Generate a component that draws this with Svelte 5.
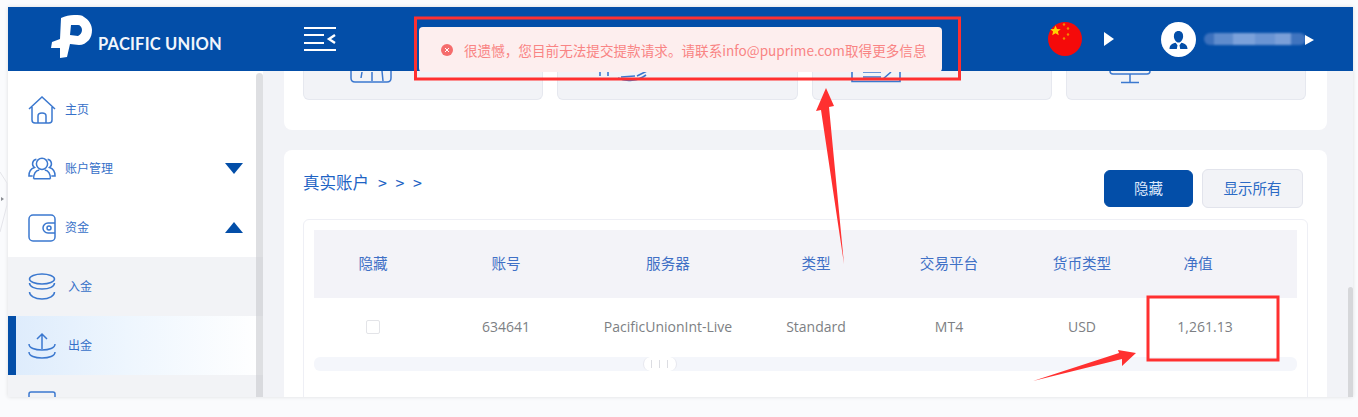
<script>
  const columns = [
    { label: "隐藏", width: 118 },
    { label: "账号", width: 148 },
    { label: "服务器", width: 176 },
    { label: "类型", width: 120 },
    { label: "交易平台", width: 146 },
    { label: "货币类型", width: 120 },
    { label: "净值", width: 112 }
  ];
  const row = ["634641", "PacificUnionInt-Live", "Standard", "MT4", "USD", "1,261.13"];
</script>

<div class="page">
  <div class="window">
    <header class="top">
      <div class="brand">
        <svg class="logo" width="42" height="44" viewBox="0 0 42 44">
          <path fill="#fff" fill-rule="evenodd" d="M10 3 C14 1 19 0 23 0 C28 0 31 0 33 2 C38 5 41 10 41 15 C41 19 40 22 38 25 C35 28 32 30 28 30 L19 29 L16 42 L9 43 L9 33 L0 33 L1 27 L9 24 Z M20 10 L19 20 L27 21 C29 20 31 18 31 15 C31 12 29 10 27 10 Z"/>
        </svg>
        <span class="brand-name">PACIFIC UNION</span>
      </div>
      <svg class="menu" width="34" height="26" viewBox="0 0 34 26" fill="none" stroke="#fff" stroke-width="2">
        <path d="M1 2H33M1 9H21M1 17H21M1 24H33" />
        <path d="M32 9L26 13L32 17" stroke-width="2.4" />
      </svg>
      <div class="top-right">
        <svg class="flag" width="34" height="34" viewBox="0 0 34 34">
          <circle cx="17" cy="17" r="17" fill="#f50a0a" />
          <path fill="#ffd000" d="M7.500 3.500l1.500 3.400 3.700.3-2.800 2.400.9 3.600-3.300-1.900-3.300 1.900.9-3.600-2.800-2.400 3.700-.3z" />
          <circle cx="16" cy="2.500" r="1.200" fill="#f08a00" />
          <circle cx="20" cy="6.500" r="1.200" fill="#f08a00" />
          <circle cx="20" cy="12.500" r="1.200" fill="#f08a00" />
          <circle cx="16" cy="16.500" r="1.200" fill="#f08a00" />
        </svg>
        <span class="caret first"></span>
        <svg class="avatar" width="35" height="35" viewBox="0 0 35 35">
          <circle cx="17.500" cy="17.500" r="17.500" fill="#fff" />
          <path fill="#034ea8" d="M17.500 9c3 0 4.600 2.200 4.600 5.200 0 3-2 6.300-4.600 6.300s-4.600-3.300-4.600-6.300C12.900 11.200 14.500 9 17.500 9z" />
          <path fill="#034ea8" d="M8.500 27c0-3.800 2.500-5.600 6.200-6.300l1.800 2.500-.7 3.800zM26.500 27c0-3.800-2.500-5.600-6.200-6.300l-1.800 2.500.7 3.800z" />
        </svg>
        <span class="blurred"></span>
        <span class="caret small"></span>
      </div>
    </header>

    <div class="body">
      <aside class="side">
        <nav class="nav">
          <div class="item">
            <svg class="ico" width="28" height="28" viewBox="0 0 28 28" fill="none" stroke="#3b78cf" stroke-width="1.500">
              <path d="M1 13L14 1l13 12M4 11v13c0 2 1 3 3 3h14c2 0 3-1 3-3V11M10 27v-7c0-2 1-3 4-3s4 1 4 3v7" />
            </svg>
            <span class="label">主页</span>
          </div>
          <div class="item">
            <svg class="ico" width="28" height="23" viewBox="0 0 30 24" fill="none" stroke="#3b78cf" stroke-width="1.600">
              <circle cx="15" cy="7" r="6" />
              <path d="M6 23c0-6 3-9 6-9.500M24 23c0-6-3-9-6-9.500M6 23h18M9 2a5 5 0 0 0-2 9c-3 1-6 4-6 9h4M21 2a5 5 0 0 1 2 9c3 1 6 4 6 9h-4" />
            </svg>
            <span class="label">账户管理</span>
            <span class="tri down"></span>
          </div>
          <div class="item">
            <svg class="ico" width="28" height="28" viewBox="0 0 28 28" fill="none" stroke="#3b78cf" stroke-width="1.500">
              <rect x="1" y="1" width="26" height="26" rx="4" />
              <path d="M27 9h-7a5 5 0 0 0 0 10h7" />
              <circle cx="21" cy="14" r="2" />
            </svg>
            <span class="label">资金</span>
            <span class="tri up"></span>
          </div>
          <div class="item sub">
            <svg class="ico" width="28" height="28" viewBox="0 0 28 28" fill="none" stroke="#3b78cf" stroke-width="1.500">
              <ellipse cx="14" cy="6" rx="12.500" ry="5" />
              <path d="M1.500 10c0 3.500 5 6 12.500 6s12.500-2.500 12.500-6M1.500 19c0 3.500 5 7 12.500 7s12.500-3.500 12.500-7" />
            </svg>
            <span class="label">入金</span>
          </div>
          <div class="item sub active">
            <svg class="ico" width="28" height="28" viewBox="0 0 28 28" fill="none" stroke="#3b78cf" stroke-width="1.500">
              <path d="M14 17V3M9 7l5-5 5 5M1 12c0 4 6 6 13 6s13-2 13-6M1 20c0 4 6 6 13 6s13-2 13-6" />
            </svg>
            <span class="label">出金</span>
          </div>
          <div class="item sub">
            <svg class="ico" width="28" height="28" viewBox="0 0 28 28" fill="none" stroke="#3b78cf" stroke-width="1.500">
              <rect x="1" y="1" width="26" height="22" rx="2" />
            </svg>
          </div>
        </nav>
        <div class="side-scroll"></div>
      </aside>

      <main class="main">
        <section class="card tiles">
          <div class="tile">
            <svg class="i1" width="42" height="12" viewBox="0 0 42 12" fill="none" stroke="#3b78cf" stroke-width="1.500">
              <path d="M1 0v7c0 3 2 4 4 4h32c2 0 4-1 4-4V0M12 1l-1 6M22 1v9M32 0l1 10" />
            </svg>
          </div>
          <div class="tile">
            <svg class="i2" width="50" height="12" viewBox="0 0 50 12" fill="none" stroke="#3b78cf" stroke-width="1.600">
              <path d="M1 0v5M9 0v5" />
              <path d="M19 7c8 4 20 3 28-3M22 6l14-1M38 5l10-5" />
            </svg>
          </div>
          <div class="tile">
            <svg class="i3" width="50" height="12" viewBox="0 0 50 12" fill="none" stroke="#3b78cf" stroke-width="1.600">
              <path d="M1 0v10.500h48V0M12 1h18M12 6h18M32 8l8-7M32 8l5 0" />
            </svg>
          </div>
          <div class="tile">
            <svg class="i4" width="42" height="13" viewBox="0 0 42 13" fill="none" stroke="#3b78cf" stroke-width="1.500">
              <path d="M1 0c0 2 1 3 3 3h34c2 0 3-1 3-3M21 3v8M12 11.500h18" />
            </svg>
          </div>
        </section>

        <section class="card accounts">
          <div class="accounts-head">
            <div class="title">真实账户<span class="chev">&gt; &gt; &gt;</span></div>
            <div class="actions">
              <button class="btn primary">隐藏</button>
              <button class="btn">显示所有</button>
            </div>
          </div>
          <div class="table-box">
            <div class="thead">
              {#each columns as col}
                <div class="cell" style="width: {col.width}px">{col.label}</div>
              {/each}
            </div>
            <div class="tbody">
              <div class="cell" style="width: {columns[0].width}px"><span class="check"></span></div>
              {#each row as value, i}
                <div class="cell" class:amount={i === row.length - 1} style="width: {columns[i + 1].width}px">{value}</div>
              {/each}
            </div>
            <div class="hscroll">
              <span class="thumb"><i></i><i></i><i></i></span>
            </div>
          </div>
        </section>
        <div class="main-scroll"></div>
      </main>
    </div>

    <div class="toast">
      <svg width="12" height="12" viewBox="0 0 12 12">
        <circle cx="6" cy="6" r="6" fill="#f56c6c" />
        <path d="M4 4l4 4M8 4l-4 4" stroke="#fff" stroke-width="1" />
      </svg>
      <span>很遗憾，您目前无法提交提款请求。请联系info@puprime.com取得更多信息</span>
    </div>
  </div>

  <svg class="marks" width="1358" height="417" viewBox="0 0 1358 417" fill="none">
    <path d="M0 172L7 183V205L0 232" stroke="#e4e5ea" />
    <path d="M1 197l3 2-3 2z" fill="#8a8c92" />
    <rect x="415.500" y="18" width="544" height="61" stroke="#ff3030" stroke-width="3" />
    <rect x="1148" y="297" width="130" height="63" stroke="#ff3030" stroke-width="3" />
    <path fill="#ff3030" d="M844 264L829 107L834 106L826 88L816 111L821 110Z" />
    <path fill="#ff3030" d="M1033 381L1122 359L1122 366L1136 353L1118 350L1119 353Z" />
  </svg>
</div>

<style>
  :global(body) {
    margin: 0;
    background: #fafbfd;
  }

  .page {
    position: relative;
    height: 417px;
    width: 1358px;
    padding: 7px 5px 20px 8px;
    box-sizing: border-box;
    overflow: hidden;
    font-family: "Noto Sans CJK SC", "Noto Sans", sans-serif;
  }

  .marks {
    position: absolute;
    left: 0;
    top: 0;
  }

  .window {
    position: relative;
    display: flex;
    flex-direction: column;
    height: 390px;
    box-shadow: 0 0 4px rgba(0, 0, 0, 0.12);
  }

  .top {
    display: flex;
    align-items: center;
    height: 64px;
    flex: none;
    background: #034ea8;
  }

  .brand {
    display: flex;
    align-items: center;
    margin-left: 43px;
    width: 252px;
  }

  .logo {
    margin-top: -4px;
  }

  .brand-name {
    margin: 9px 0 0 5px;
    color: #f2f6fc;
    font: 700 16.500px "Lato", sans-serif;
    letter-spacing: 0.2px;
    white-space: nowrap;
  }

  .top-right {
    display: flex;
    align-items: center;
    margin-left: auto;
    padding-right: 39px;
  }

  .flag {
    margin-right: 22px;
  }

  .caret {
    width: 0;
    height: 0;
    border-left: 10px solid #fff;
    border-top: 7px solid transparent;
    border-bottom: 7px solid transparent;
  }

  .caret.first {
    margin-right: 47px;
  }

  .caret.small {
    position: relative;
    margin-left: -1px;
    border-left-width: 9px;
    border-top-width: 5.500px;
    border-bottom-width: 5.500px;
    margin-top: 2px;
  }

  .avatar {
    margin-right: 8px;
  }

  .blurred {
    width: 102px;
    height: 12px;
    border-radius: 6px;
    background: linear-gradient(90deg, #3c71bd 0 10%, #5f8ccd 10% 28%, #7ba1da 28% 50%, #6a94d3 50% 70%, #7a9fd8 70% 85%, #3f74bf 85% 100%);
    filter: blur(1px);
  }

  .body {
    display: flex;
    flex: 1;
    min-height: 0;
  }

  .side {
    position: relative;
    flex: none;
    width: 255px;
    background: #fff;
    overflow: hidden;
  }

  .nav {
    display: flex;
    flex-direction: column;
  }

  .item {
    display: flex;
    align-items: center;
    height: 59px;
    padding: 0 20px 0 20px;
    flex: none;
    box-sizing: border-box;
  }

  .item:first-child {
    height: 68px;
    padding-top: 9px;
  }

  .item .ico {
    flex: none;
    width: 28px;
  }

  .label {
    margin: -3px 0 0 9px;
    color: #3670c8;
    font-size: 12px;
  }

  .sub {
    background: #f2f3f6;
  }

  .sub .label {
    margin-left: 12px;
  }

  .active {
    padding-left: 12px;
    border-left: 8px solid #034ea8;
    background: linear-gradient(90deg, #deecfc 0%, #eef6fe 45%, #fff 100%);
  }

  .tri {
    margin-left: auto;
    width: 0;
    height: 0;
    border-left: 9px solid transparent;
    border-right: 9px solid transparent;
  }

  .tri.down {
    border-top: 11px solid #034ea8;
  }

  .tri.up {
    border-bottom: 11px solid #034ea8;
  }

  .side-scroll {
    position: absolute;
    top: 2px;
    right: 0;
    bottom: 0;
    width: 7px;
    background: rgba(200, 202, 206, 0.6);
    border-radius: 4px 4px 0 0;
  }

  .main {
    position: relative;
    flex: 1;
    min-width: 0;
    padding: 0 26px 0 21px;
    background: #f2f3f7;
    overflow: hidden;
  }

  .main-scroll {
    position: absolute;
    top: 216px;
    right: 0;
    bottom: 0;
    width: 5px;
    border-radius: 3px 3px 0 0;
    background: #d6d7da;
  }

  .card {
    background: #fff;
    border-radius: 8px;
  }

  .tiles {
    display: flex;
    gap: 14px;
    height: 59px;
    padding: 0 21px 0 19px;
    border-radius: 0 0 8px 8px;
  }

  .tile {
    flex: 1;
    display: flex;
    align-items: flex-start;
    height: 29px;
    box-sizing: border-box;
    background: #f2f3f7;
    border: 1px solid #e6e8ef;
    border-top: none;
    border-radius: 0 0 6px 6px;
  }

  .i1 {
    margin-left: 46px;
  }

  .i2 {
    margin-left: 41px;
  }

  .i3 {
    margin-left: 38px;
  }

  .i4 {
    margin-left: 42px;
  }

  .accounts {
    height: 300px;
    margin-top: 20px;
    padding: 19px 19px 0;
  }

  .accounts-head {
    display: flex;
    justify-content: space-between;
    height: 50px;
  }

  .title {
    margin-top: 1px;
    color: #1e63c4;
    font-size: 16.500px;
    line-height: 24px;
  }

  .chev {
    margin-left: 9px;
    font-size: 16px;
    letter-spacing: 2.500px;
  }

  .actions {
    display: flex;
    gap: 9px;
    align-items: center;
    height: 39px;
    margin-right: 5px;
  }

  .btn {
    width: 101px;
    height: 39px;
    padding: 0 0 3px;
    color: #2b6ac5;
    font: 400 14.500px "Noto Sans CJK SC", sans-serif;
    background: #f2f3f7;
    border: 1px solid #e2e4ec;
    border-radius: 6px;
  }

  .btn.primary {
    width: 89px;
    height: 37px;
    color: #dce8fb;
    background: #034ea8;
    border-color: #034ea8;
  }

  .table-box {
    height: 240px;
    padding: 10px 10px 0;
    border: 1px solid #eeeff5;
    border-radius: 6px;
    box-sizing: border-box;
  }

  .thead,
  .tbody {
    display: flex;
    align-items: center;
    justify-content: flex-start;
  }

  .thead {
    height: 68px;
    padding-bottom: 4px;
    box-sizing: border-box;
    color: #3f70c6;
    font-size: 14.600px;
    background: #f3f3f8;
  }

  .tbody {
    height: 59px;
    padding-bottom: 2px;
    box-sizing: border-box;
    color: #7d7f84;
    font: 14px "Open Sans", "Noto Sans", sans-serif;
  }

  .cell {
    flex: none;
    text-align: center;
  }

  .amount {
    padding-left: 7px;
  }

  .check {
    display: block;
    width: 12px;
    height: 12px;
    margin: 0 auto;
    border: 1px solid #e3e4e8;
    border-radius: 2px;
  }

  .hscroll {
    display: flex;
    justify-content: center;
    height: 14px;
    border-radius: 6px;
    background: #f4f6fb;
  }

  .thumb {
    display: flex;
    align-items: center;
    justify-content: center;
    gap: 7px;
    margin-right: 292px;
    width: 34px;
    height: 14px;
    box-sizing: border-box;
    background: #fff;
    border-left: 1px solid #e6e7ee;
    border-right: 1px solid #e6e7ee;
    border-radius: 7px;
  }

  .thumb i {
    width: 1px;
    height: 8px;
    background: #dcdde2;
  }

  .toast {
    position: absolute;
    left: 411px;
    top: 20px;
    display: flex;
    align-items: center;
    gap: 11px;
    width: 523px;
    height: 45px;
    padding-left: 22px;
    box-sizing: border-box;
    color: #f98484;
    font-size: 13.600px;
    white-space: nowrap;
    background: #fdeeee;
    border-radius: 4px;
  }
</style>
